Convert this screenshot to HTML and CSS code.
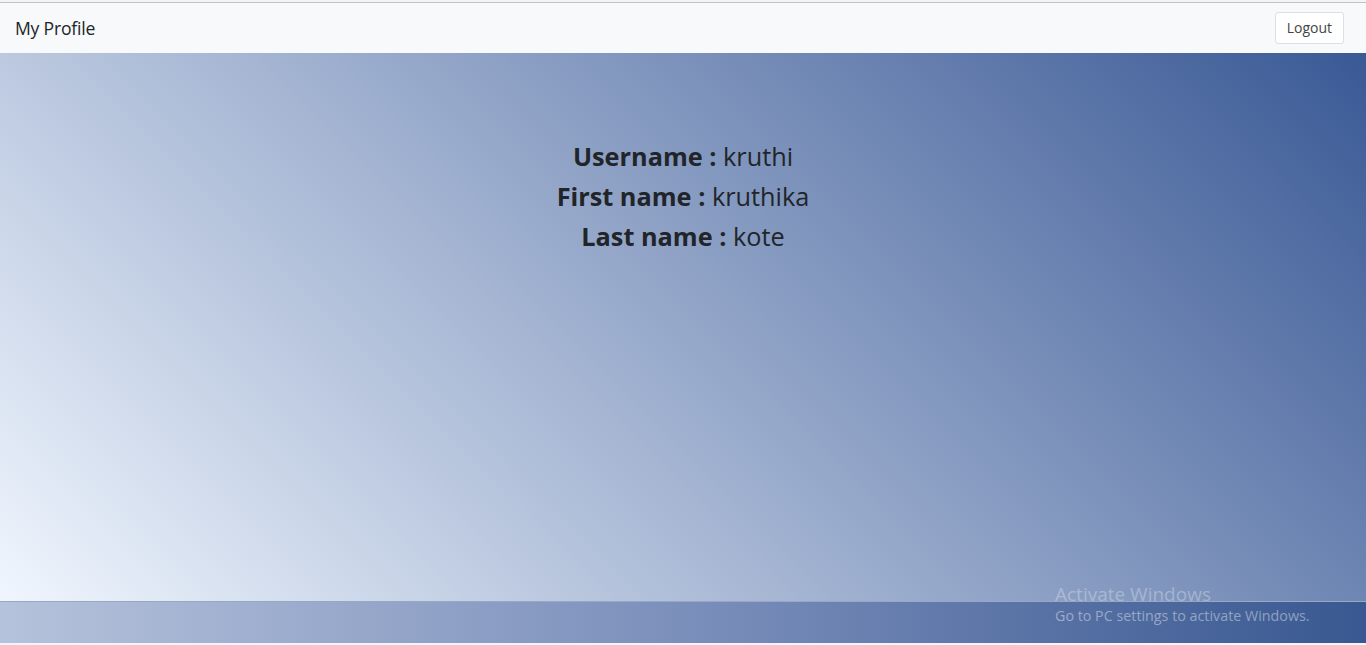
FILE: index.html
```html
<!DOCTYPE html>
<html lang="en">
<head>
<meta charset="utf-8">
<title>My Profile</title>
<link rel="stylesheet" href="styles.css">
</head>
<body>
<div class="page">
  <div class="topgap"></div>
  <nav class="navbar">
    <span class="brand">My Profile</span>
    <button class="btn-logout" type="button">Logout</button>
  </nav>
  <main class="main">
    <div class="profile">
      <h3 class="row"><b>Username :</b> kruthi</h3>
      <h3 class="row"><b>First name :</b> kruthika</h3>
      <h3 class="row"><b>Last name :</b> kote</h3>
    </div>
  </main>
  <footer class="footer"></footer>
  <div class="bottomgap"></div>
</div>
<div class="watermark">
  <div class="wm-title">Activate Windows</div>
  <div class="wm-sub">Go to PC settings to activate Windows.</div>
</div>
</body>
</html>
```

FILE: styles.css
```css
html, body {
  margin: 0;
  padding: 0;
  height: 100%;
  overflow: hidden;
}
body {
  font-family: "Open Sans", "Noto Sans", sans-serif;
  color: #212529;
  background: #f3f6fb;
}
.page {
  display: flex;
  flex-direction: column;
  height: 645px;
}
.topgap {
  height: 2px;
  background: #f4f4f4;
  border-bottom: 1px solid #c3c3c3;
}
.navbar {
  height: 50px;
  background: #f8f9fa;
  display: flex;
  align-items: center;
  justify-content: space-between;
  padding: 0 22px 0 15px;
  box-sizing: border-box;
}
.brand {
  font-size: 17.6px;
  color: #212529;
  letter-spacing: -0.2px;
}
.btn-logout {
  font-family: inherit;
  font-size: 14px;
  color: #444;
  background: #fff;
  border: 1px solid #dcdfe3;
  border-radius: 3px;
  height: 32px;
  padding: 0 11px;
  margin-top: -1px;
}
.main {
  height: 548px;
  background: linear-gradient(45deg, #f0f6fe 0%, #3a5995 100%);
  display: flex;
  justify-content: center;
}
.profile {
  padding-top: 83px;
  text-align: center;
}
.row {
  margin: 0;
  font-size: 25.3px;
  font-weight: 400;
  line-height: 40px;
  color: #212529;
}
.row b {
  font-weight: 700;
}
.footer {
  height: 42px;
  background: linear-gradient(to right, #b5c2db 0%, #7b8fbb 50%, #395891 100%);
  border-top: 1px solid #97a7c6;
  box-sizing: border-box;
}
.bottomgap {
  flex: 1;
  background: #f2f5fa;
}
.watermark {
  position: absolute;
  left: 1055px;
  top: 582px;
  font-family: "Open Sans", "Noto Sans", sans-serif;
}
.wm-title {
  font-size: 19px;
  line-height: 24px;
  color: rgba(255, 255, 255, 0.3);
}
.wm-sub {
  font-size: 14.3px;
  line-height: 20px;
  color: rgba(255, 255, 255, 0.42);
}
```
